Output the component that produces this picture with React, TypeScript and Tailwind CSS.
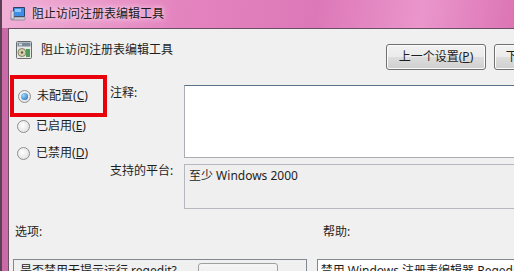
import React from "react";

const font = "font-['Noto_Sans','Noto_Sans_CJK_SC',sans-serif]";

const Radio = ({ checked, label, hotkey }: { checked?: boolean; label: string; hotkey: string }) => {
  return (
    <div className="flex items-center gap-[6px] h-[16px]">
      <span className="w-[13px] h-[13px] rounded-full border border-[#8f8f8f] bg-[radial-gradient(circle_at_40%_40%,#ffffff,#d9d9d9)] flex items-center justify-center">
        {checked && (
          <span className="w-[7px] h-[7px] rounded-full bg-[radial-gradient(circle_at_35%_35%,#9adcff,#1a5eb4)]" />
        )}
      </span>
      <span className="text-[12px] leading-[16px] text-[#1e1e1e]">
        {label}(<span className="underline">{hotkey}</span>)
      </span>
    </div>
  );
};

const WinButton = ({ children }: { children: React.ReactNode }) => {
  return (
    <div className="w-[100px] h-[26px] shrink-0 rounded-[3px] border border-[#707070] bg-[linear-gradient(180deg,#f2f2f2_0%,#ebebeb_48%,#dddddd_52%,#cfcfcf_100%)] flex items-center justify-center text-[12px] text-[#1e1e1e] shadow-[inset_0_0_0_1px_#fcfcfc]">
      {children}
    </div>
  );
};

const TitleIcon = () => (
  <svg width="16" height="16" viewBox="0 0 16 16">
    <rect x="3" y="1" width="12" height="10" rx="1" fill="#2b3f66" />
    <rect x="4" y="2" width="10" height="8" fill="#3f8ee6" />
    <rect x="5" y="3" width="6" height="3" fill="#8cc8ff" />
    <rect x="1" y="11" width="14" height="3" rx="1" fill="#c9ccd2" stroke="#6e7480" strokeWidth="0.6" />
    <rect x="1" y="5" width="3" height="8" fill="#d5d8de" stroke="#6e7480" strokeWidth="0.6" />
  </svg>
);

const PolicyIcon = () => (
  <svg width="16" height="18" viewBox="0 0 16 18">
    <rect x="0.5" y="0.5" width="15" height="17" rx="1" fill="#e8e8e8" stroke="#6b6b6b" />
    <rect x="1.5" y="1.5" width="13" height="4" fill="#7a8a9a" />
    <rect x="3" y="2.5" width="3" height="2" fill="#d0d8e0" />
    <circle cx="6" cy="11.5" r="4" fill="#d8d0b0" stroke="#6b6b4b" strokeWidth="0.8" />
    <circle cx="6" cy="11.5" r="1.2" fill="#5a5a40" />
    <rect x="10" y="8" width="4" height="8" fill="#4f9a5a" />
  </svg>
);

const App = () => {
  return (
    <div className={`w-[514px] h-[271px] overflow-hidden border-l-2 border-[#5a3f55] bg-[linear-gradient(90deg,#c96aa6_0%,#e98fc6_45%,#d173b0_100%)] ${font}`}>
      {/* title bar */}
      <div className="h-[28px] flex items-center gap-[6px] pl-[8px] w-[700px] bg-[linear-gradient(100deg,#f0b0d6_0%,#e484bf_25%,#dd78b8_45%,#ea96cb_60%,#da70b2_75%,#e587c1_100%)]">
        <TitleIcon />
        <span className="text-[12px] leading-[16px] text-[#1a1a1a] [text-shadow:0_0_8px_#f8dcee,0_0_4px_#f8dcee]">
          阻止访问注册表编辑工具
        </span>
      </div>

      {/* client area */}
      <div className="ml-[6px] w-[700px] h-[300px] border-l border-t border-[#6a4f64] bg-[#f0f0f0]">
        {/* header */}
        <div className="flex items-start h-[46px]">
          <div className="w-[377px] flex items-center gap-[9px] pl-[7px] pt-[12px]">
            <PolicyIcon />
            <span className="text-[12px] leading-[16px] text-[#1e1e1e]">阻止访问注册表编辑工具</span>
          </div>
          <div className="flex gap-[8px] pt-[15px]">
            <WinButton>
              上一个设置(<span className="underline">P</span>)
            </WinButton>
            <WinButton>
              下一个设置(<span className="underline">N</span>)
            </WinButton>
          </div>
        </div>

        {/* main */}
        <div className="flex">
          <div className="w-[101px] flex flex-col">
            <div className="ml-[1px] w-[97px] h-[42px] border-4 border-[#e8000b] flex items-center pl-[4px]">
              <Radio checked label="未配置" hotkey="C" />
            </div>
            <div className="pl-[8px] mt-[1px] flex flex-col gap-[11px]">
              <Radio label="已启用" hotkey="E" />
              <Radio label="已禁用" hotkey="D" />
            </div>
          </div>
          <div className="w-[74px] flex flex-col text-[12px] leading-[16px] text-[#1e1e1e]">
            <span className="mt-[10px]">注释:</span>
            <span className="mt-[62px]">支持的平台:</span>
          </div>
          <div className="flex flex-col">
            <div className="mt-[10px] w-[420px] h-[73px] border border-[#abadb3] border-t-[#5b7189] bg-white" />
            <div className="mt-[6px] w-[420px] h-[45px] border border-[#b5b8bf] bg-[#efefef] px-[4px] pt-[3px] text-[12px] leading-[16px] text-[#1e1e1e]">
              至少 Windows 2000
            </div>
          </div>
        </div>

        {/* labels */}
        <div className="flex mt-[15px] text-[12px] leading-[16px] text-[#1e1e1e]">
          <span className="w-[314px] pl-[6px]">选项:</span>
          <span>帮助:</span>
        </div>

        {/* panels */}
        <div className="flex mt-[19px] gap-[10px]">
          <div className="ml-[4px] w-[300px] h-[40px] border border-[#828790] bg-[#f0f0f0] flex items-start pl-[6px] pt-[3px] gap-[4px] text-[12px] leading-[16px] text-[#1e1e1e]">
            <span className="w-[174px]">是否禁用无提示运行 regedit?</span>
            <div className="w-[80px] h-[22px] rounded-[3px] border border-[#a0a0a0] bg-[linear-gradient(180deg,#f6f6f6,#e6e6e6)]" />
          </div>
          <div className="w-[400px] h-[40px] border border-[#828790] bg-white pl-[3px] pt-[3px] text-[12px] leading-[16px] text-[#1e1e1e]">
            禁用 Windows 注册表编辑器 Regedit.exe。
          </div>
        </div>
      </div>
    </div>
  );
};

export default App;
